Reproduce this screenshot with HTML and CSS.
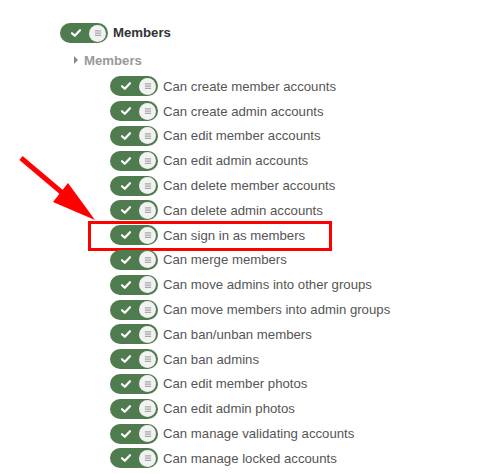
FILE: index.html
```html
<!DOCTYPE html>
<html>
<head>
<meta charset="utf-8">
<link rel="stylesheet" href="styles.css">
</head>
<body>
<div class="page">
  <div class="group-head">
    <span class="toggle"><svg class="chk" viewBox="0 0 10 8"><path d="M1 4.2 L3.8 6.8 L9 1.2" /></svg><span class="knob"><svg viewBox="0 0 8 8"><path d="M1.5 2.2H6.5M1.5 4H6.5M1.5 5.8H6.5"/></svg></span></span>
    <span class="head-label">Members</span>
  </div>
  <div class="sub-head"><span class="tri"></span><span>Members</span></div>
  <ul class="perms">
    <li><span class="toggle"><svg class="chk" viewBox="0 0 10 8"><path d="M1 4.2 L3.8 6.8 L9 1.2" /></svg><span class="knob"><svg viewBox="0 0 8 8"><path d="M1.5 2.2H6.5M1.5 4H6.5M1.5 5.8H6.5"/></svg></span></span>Can create member accounts</li>
    <li><span class="toggle"><svg class="chk" viewBox="0 0 10 8"><path d="M1 4.2 L3.8 6.8 L9 1.2" /></svg><span class="knob"><svg viewBox="0 0 8 8"><path d="M1.5 2.2H6.5M1.5 4H6.5M1.5 5.8H6.5"/></svg></span></span>Can create admin accounts</li>
    <li><span class="toggle"><svg class="chk" viewBox="0 0 10 8"><path d="M1 4.2 L3.8 6.8 L9 1.2" /></svg><span class="knob"><svg viewBox="0 0 8 8"><path d="M1.5 2.2H6.5M1.5 4H6.5M1.5 5.8H6.5"/></svg></span></span>Can edit member accounts</li>
    <li><span class="toggle"><svg class="chk" viewBox="0 0 10 8"><path d="M1 4.2 L3.8 6.8 L9 1.2" /></svg><span class="knob"><svg viewBox="0 0 8 8"><path d="M1.5 2.2H6.5M1.5 4H6.5M1.5 5.8H6.5"/></svg></span></span>Can edit admin accounts</li>
    <li><span class="toggle"><svg class="chk" viewBox="0 0 10 8"><path d="M1 4.2 L3.8 6.8 L9 1.2" /></svg><span class="knob"><svg viewBox="0 0 8 8"><path d="M1.5 2.2H6.5M1.5 4H6.5M1.5 5.8H6.5"/></svg></span></span>Can delete member accounts</li>
    <li><span class="toggle"><svg class="chk" viewBox="0 0 10 8"><path d="M1 4.2 L3.8 6.8 L9 1.2" /></svg><span class="knob"><svg viewBox="0 0 8 8"><path d="M1.5 2.2H6.5M1.5 4H6.5M1.5 5.8H6.5"/></svg></span></span>Can delete admin accounts</li>
    <li class="highlight"><span class="toggle"><svg class="chk" viewBox="0 0 10 8"><path d="M1 4.2 L3.8 6.8 L9 1.2" /></svg><span class="knob"><svg viewBox="0 0 8 8"><path d="M1.5 2.2H6.5M1.5 4H6.5M1.5 5.8H6.5"/></svg></span></span>Can sign in as members</li>
    <li><span class="toggle"><svg class="chk" viewBox="0 0 10 8"><path d="M1 4.2 L3.8 6.8 L9 1.2" /></svg><span class="knob"><svg viewBox="0 0 8 8"><path d="M1.5 2.2H6.5M1.5 4H6.5M1.5 5.8H6.5"/></svg></span></span>Can merge members</li>
    <li><span class="toggle"><svg class="chk" viewBox="0 0 10 8"><path d="M1 4.2 L3.8 6.8 L9 1.2" /></svg><span class="knob"><svg viewBox="0 0 8 8"><path d="M1.5 2.2H6.5M1.5 4H6.5M1.5 5.8H6.5"/></svg></span></span>Can move admins into other groups</li>
    <li><span class="toggle"><svg class="chk" viewBox="0 0 10 8"><path d="M1 4.2 L3.8 6.8 L9 1.2" /></svg><span class="knob"><svg viewBox="0 0 8 8"><path d="M1.5 2.2H6.5M1.5 4H6.5M1.5 5.8H6.5"/></svg></span></span>Can move members into admin groups</li>
    <li><span class="toggle"><svg class="chk" viewBox="0 0 10 8"><path d="M1 4.2 L3.8 6.8 L9 1.2" /></svg><span class="knob"><svg viewBox="0 0 8 8"><path d="M1.5 2.2H6.5M1.5 4H6.5M1.5 5.8H6.5"/></svg></span></span>Can ban/unban members</li>
    <li><span class="toggle"><svg class="chk" viewBox="0 0 10 8"><path d="M1 4.2 L3.8 6.8 L9 1.2" /></svg><span class="knob"><svg viewBox="0 0 8 8"><path d="M1.5 2.2H6.5M1.5 4H6.5M1.5 5.8H6.5"/></svg></span></span>Can ban admins</li>
    <li><span class="toggle"><svg class="chk" viewBox="0 0 10 8"><path d="M1 4.2 L3.8 6.8 L9 1.2" /></svg><span class="knob"><svg viewBox="0 0 8 8"><path d="M1.5 2.2H6.5M1.5 4H6.5M1.5 5.8H6.5"/></svg></span></span>Can edit member photos</li>
    <li><span class="toggle"><svg class="chk" viewBox="0 0 10 8"><path d="M1 4.2 L3.8 6.8 L9 1.2" /></svg><span class="knob"><svg viewBox="0 0 8 8"><path d="M1.5 2.2H6.5M1.5 4H6.5M1.5 5.8H6.5"/></svg></span></span>Can edit admin photos</li>
    <li><span class="toggle"><svg class="chk" viewBox="0 0 10 8"><path d="M1 4.2 L3.8 6.8 L9 1.2" /></svg><span class="knob"><svg viewBox="0 0 8 8"><path d="M1.5 2.2H6.5M1.5 4H6.5M1.5 5.8H6.5"/></svg></span></span>Can manage validating accounts</li>
    <li><span class="toggle"><svg class="chk" viewBox="0 0 10 8"><path d="M1 4.2 L3.8 6.8 L9 1.2" /></svg><span class="knob"><svg viewBox="0 0 8 8"><path d="M1.5 2.2H6.5M1.5 4H6.5M1.5 5.8H6.5"/></svg></span></span>Can manage locked accounts</li>
  </ul>
  <svg class="arrow" width="110" height="80" viewBox="0 0 110 80">
    <path d="M21 3 L66 41" stroke="#ff0000" stroke-width="5" fill="none"/>
    <polygon points="53,47 68,28 95,65" fill="#ff0000"/>
  </svg>
</div>
</body>
</html>
```
FILE: styles.css
```css
html, body {
  margin: 0;
  padding: 0;
  background: #ffffff;
}
.page {
  position: relative;
  width: 500px;
  height: 474px;
  overflow: hidden;
  font-family: "Liberation Sans", Arial, sans-serif;
  font-size: 13.2px;
}
.toggle {
  display: inline-flex;
  align-items: center;
  justify-content: space-between;
  box-sizing: border-box;
  width: 48px;
  height: 20px;
  padding: 0 2px 0 11px;
  border-radius: 10px;
  background: #4f7c4f;
  flex: none;
}
.chk {
  width: 10px;
  height: 8px;
}
.chk path {
  fill: none;
  stroke: #ffffff;
  stroke-width: 2.2;
  stroke-linecap: round;
  stroke-linejoin: round;
}
.knob {
  width: 17px;
  height: 17px;
  border-radius: 50%;
  background: #f2f2f2;
  display: flex;
  align-items: center;
  justify-content: center;
}
.knob svg {
  width: 10px;
  height: 10px;
}
.knob path {
  stroke: #a8a8a8;
  stroke-width: 1;
  fill: none;
}
.group-head {
  display: flex;
  align-items: center;
  gap: 5px;
  margin: 23px 0 0 60px;
  height: 20px;
}
.head-label {
  font-weight: bold;
  color: #333333;
  position: relative;
  top: -1px;
}
.sub-head {
  display: flex;
  align-items: center;
  gap: 6px;
  margin: 9px 0 0 74px;
  height: 16px;
  font-weight: bold;
  color: #999999;
}
.tri {
  width: 0;
  height: 0;
  border-top: 4px solid transparent;
  border-bottom: 4px solid transparent;
  border-left: 4px solid #888888;
}
.perms {
  list-style: none;
  margin: 6px 0 0 110px;
  padding: 0;
}
.perms li {
  display: flex;
  align-items: center;
  gap: 5px;
  height: 24.8px;
  color: #555555;
  position: relative;
}
.highlight::before {
  content: "";
  position: absolute;
  left: -22px;
  top: -2px;
  width: 244px;
  height: 30px;
  box-sizing: border-box;
  border: 3px solid #ff0000;
}
.arrow {
  position: absolute;
  left: 0;
  top: 155px;
}
```
